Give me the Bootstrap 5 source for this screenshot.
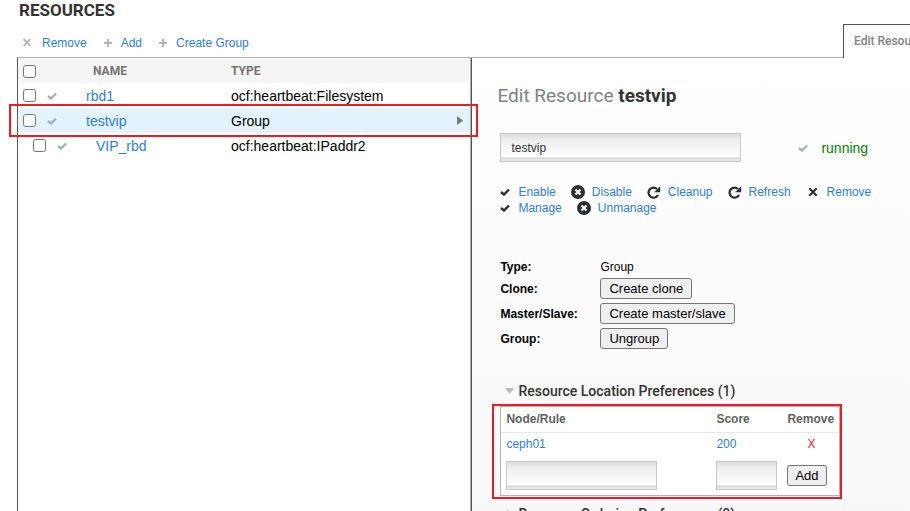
<!DOCTYPE html>
<html lang="en">
<head>
<meta charset="utf-8">
<meta name="viewport" content="width=device-width, initial-scale=1">
<title>Resources</title>
<link href="https://cdn.jsdelivr.net/npm/bootstrap@5.3.0/dist/css/bootstrap.min.css" rel="stylesheet">
<style>
body { font: 12px/16px "Liberation Sans", Arial, sans-serif; color: #000; background: #fff; padding-left: 17px; }
a { color: #2f7dd6; text-decoration: none; }
svg { display: block; flex: none; }
h1, h2, h3, .edit-tab, .res-table th { font-family: Roboto, "Noto Sans", sans-serif; }
h1 { font-size: 17px; line-height: 20px; font-weight: 700; color: #333; padding-left: 2px; }
.top-tools { height: 29px; color: #b4b4b4; padding-left: 5px; }
.top-tools svg { margin-right: 9px; }
.top-tools svg:first-child { margin-right: 10px; }
.top-tools a { margin-right: 17px; }
.edit-tab { width: 67px; height: 34px; border: 1px solid #555; border-width: 1px 0 0 1px; padding-left: 10px; font-size: 12px; line-height: 32px; font-weight: 500; color: #808285; background: #fff; margin-bottom: -1px; }
.panels { border-top: 1px solid #b0b0b0; }
.list-pane { flex: 0 0 51%; border-left: 1px solid #555; border-right: 1px solid #555; padding: 1px; box-shadow: inset -1px 0 #b0b0b0; }
.edit-pane { background: linear-gradient(#fff, #f8f8f8); padding: 26px 0 0 28px; min-width: 0; }
.res-table { table-layout: fixed; width: 100%; font-size: 14px; }
.res-table td, .res-table th { height: 25px; padding: 0; vertical-align: middle; }
.res-table th { height: 24px; background: #f5f5f5; color: #757575; font-size: 12px; font-weight: 700; }
.res-table .picked td { background: #e3f3fd; }
.c-tick { width: 67px; } .c-name { width: 145px; } .c-arrow { width: 18px; }
.res-table .head-name { padding-left: 7px; }
.tick { width: 13px; height: 13px; margin: 0; display: block; }
.pick { gap: 11px; padding-left: 4px; }
.indent { padding-left: 14px; }
.res-table .indent-name { padding-left: 10px; }
.frame { position: absolute; border: 2px solid #ed1c24; pointer-events: none; z-index: 2; }
.row-frame { inset: 46px -7px auto -9px; height: 33px; }
.pref-frame { inset: -3px -3px -4px -9px; }
h2 { font-size: 19px; line-height: 24px; font-weight: 400; color: #808285; margin: 0 0 25px -3px; }
h2 strong { font-weight: 700; color: #333; }
.sunk { border: 1px solid #c8c8c8; border-radius: 0; height: 29px; padding: 0 10px; font-size: 12px; color: #333; background: linear-gradient(#dcdcdc, #eee 6px, #fdfdfd 23px, #ccc 24px, #e4e4e4 25px, #e8e8e8); }
.name-box { width: 241px; }
.node-box { width: 151px; }
.score-box { width: 61px; }
.status { margin-left: 57px; gap: 13px; font-size: 14px; color: #008000; }
.acts { color: #2b2f33; margin-top: 22px; }
.acts svg { margin-right: 7px; }
.acts svg:first-child { margin-right: 8px; }
.acts a { margin-right: 15px; }
.facts { grid-template-columns: 100px auto; justify-content: start; justify-items: start; align-items: center; grid-template-rows: 19px; grid-auto-rows: 25px; margin-top: 41px; }
.plain { border: 1px solid #767676; border-radius: 3px; background: #efefef; color: #000; font-size: 13px; line-height: 17px; padding: 1px 8px; }
.plain.tight { padding: 1px 7px; }
h3 { font-size: 14px; line-height: 20px; font-weight: 500; color: #333; margin: 0; }
.pref-head { margin: 30px 0 5px; padding-left: 5px; }
.pref-box { width: 340px; border: 1px solid #b4b4b4; background: #fff; }
.pref-table { table-layout: fixed; width: 100%; }
.pref-table th, .pref-table td { padding: 0 0 0 5px; height: 24px; vertical-align: middle; }
.pref-table th { color: #606060; border-bottom: 1px solid #e8e8e8; height: 25px; }
.pref-table tr:last-child td { height: 39px; }
.w-node { width: 210px; } .w-score { width: 71px; }
.pref-table .del { color: #ed1c24; }
</style>
<script src="https://cdn.jsdelivr.net/npm/bootstrap@5.3.0/dist/js/bootstrap.bundle.min.js"></script>
</head>
<body class="d-flex flex-column vh-100 overflow-hidden">
<svg width="0" height="0" class="position-absolute" aria-hidden="true">
  <symbol id="check" viewBox="0 0 10 8"><path d="M1 4l3 2.5L9 1.5" fill="none" stroke="currentColor" stroke-width="2.3"/></symbol>
  <symbol id="cross" viewBox="0 0 10 10"><path d="M1.3 1.3l7.4 7.4M8.7 1.3L1.3 8.7" fill="none" stroke="currentColor" stroke-width="2.2"/></symbol>
  <symbol id="plus" viewBox="0 0 8 8"><path d="M4 0v8M0 4h8" fill="none" stroke="currentColor" stroke-width="2"/></symbol>
  <symbol id="stop" viewBox="0 0 14 14"><circle cx="7" cy="7" r="7" fill="currentColor"/><path d="M4.5 4.5l5 5M9.5 4.5l-5 5" stroke="#fff" stroke-width="2.2"/></symbol>
  <symbol id="reload" viewBox="0 0 14 13"><path d="M11 9A5 5 0 1 1 10 3" fill="none" stroke="currentColor" stroke-width="2.3"/><path d="M13.2 .3v6H7.2z" fill="currentColor"/></symbol>
</svg>
<header class="d-flex align-items-end justify-content-between flex-shrink-0">
  <div>
    <h1 class="m-0">RESOURCES</h1>
    <div class="top-tools d-flex align-items-center mt-2">
      <svg width="10" height="9"><use href="#cross"/></svg><a href="#">Remove</a>
      <svg width="8" height="8"><use href="#plus"/></svg><a href="#">Add</a>
      <svg width="8" height="8"><use href="#plus"/></svg><a href="#">Create Group</a>
    </div>
  </div>
  <div class="edit-tab overflow-hidden text-nowrap position-relative">Edit Resource</div>
</header>
<main class="panels d-flex flex-grow-1">
  <section class="list-pane position-relative">
    <table class="res-table">
      <colgroup><col class="c-tick"><col class="c-name"><col><col class="c-arrow"></colgroup>
      <thead><tr><th><div class="pick d-flex"><input type="checkbox" class="tick" aria-label="Select all"></div></th><th class="head-name">NAME</th><th>TYPE</th><th></th></tr></thead>
      <tbody>
        <tr><td><div class="pick d-flex align-items-center"><input type="checkbox" class="tick" aria-label="rbd1"><svg width="10" height="8" color="#a5b0b4"><use href="#check"/></svg></div></td><td><a href="#">rbd1</a></td><td>ocf:heartbeat:Filesystem</td><td></td></tr>
        <tr class="picked"><td><div class="pick d-flex align-items-center"><input type="checkbox" class="tick" aria-label="testvip"><svg width="10" height="8" color="#a5b0b4"><use href="#check"/></svg></div></td><td><a href="#">testvip</a></td><td>Group</td><td><svg class="ms-1" width="7" height="9"><path d="M1 0l6 4.5L1 9z" fill="#757b80"/></svg></td></tr>
        <tr><td><div class="pick indent d-flex align-items-center"><input type="checkbox" class="tick" aria-label="VIP_rbd"><svg width="10" height="8" color="#a5b0b4"><use href="#check"/></svg></div></td><td class="indent-name"><a href="#">VIP_rbd</a></td><td>ocf:heartbeat:IPaddr2</td><td></td></tr>
      </tbody>
    </table>
    <div class="frame row-frame"></div>
  </section>
  <section class="edit-pane flex-grow-1">
    <h2>Edit Resource <strong>testvip</strong></h2>
    <div class="d-flex align-items-center">
      <input type="text" class="sunk name-box" value="testvip" aria-label="Resource name">
      <div class="status d-flex align-items-center"><svg width="10" height="8" color="#a5b0b4"><use href="#check"/></svg>running</div>
    </div>
    <div class="acts">
      <div class="d-flex align-items-center">
        <svg width="10" height="8"><use href="#check"/></svg><a href="#">Enable</a>
        <svg width="14" height="14"><use href="#stop"/></svg><a href="#">Disable</a>
        <svg width="14" height="13"><use href="#reload"/></svg><a href="#">Cleanup</a>
        <svg width="14" height="13"><use href="#reload"/></svg><a href="#">Refresh</a>
        <svg width="14" height="10"><use href="#cross"/></svg><a href="#">Remove</a>
      </div>
      <div class="d-flex align-items-center">
        <svg width="10" height="8"><use href="#check"/></svg><a href="#">Manage</a>
        <svg width="14" height="14"><use href="#stop"/></svg><a href="#">Unmanage</a>
      </div>
    </div>
    <div class="facts d-grid">
      <strong>Type:</strong><span>Group</span>
      <strong>Clone:</strong><button type="button" class="plain">Create clone</button>
      <strong>Master/Slave:</strong><button type="button" class="plain">Create master/slave</button>
      <strong>Group:</strong><button type="button" class="plain">Ungroup</button>
    </div>
    <div class="pref-head d-flex align-items-center"><svg width="9" height="6" class="me-1"><path d="M0 0h9L4.500 6z" fill="#bbb"/></svg><h3>Resource Location Preferences (1)</h3></div>
    <div class="pref-box position-relative">
      <table class="pref-table">
        <colgroup><col class="w-node"><col class="w-score"><col></colgroup>
        <thead><tr><th>Node/Rule</th><th>Score</th><th>Remove</th></tr></thead>
        <tbody>
          <tr><td><a href="#">ceph01</a></td><td><a href="#">200</a></td><td><a href="#" class="del ps-3 ms-1">X</a></td></tr>
          <tr><td><input type="text" class="sunk node-box" aria-label="Node"></td><td><input type="text" class="sunk score-box" aria-label="Score"></td><td><button type="button" class="plain tight">Add</button></td></tr>
        </tbody>
      </table>
      <div class="frame pref-frame"></div>
    </div>
    <div class="d-flex align-items-center mt-2 ps-1"><svg width="10" height="10" class="me-1"><path d="M3 0v10l5-5z" fill="#bbb"/></svg><h3>Resource Ordering Preferences (0)</h3></div>
  </section>
</main>
</body>
</html>
